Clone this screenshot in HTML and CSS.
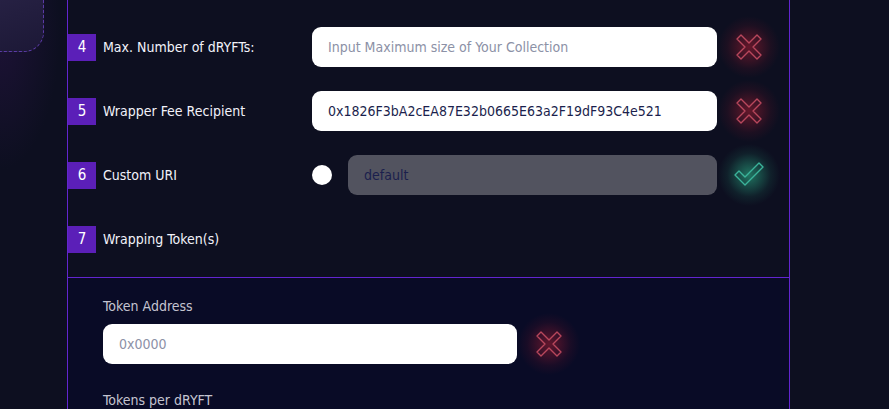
FILE: index.html
```html
<!DOCTYPE html>
<html lang="en">
<head>
  <meta charset="UTF-8" />
  <title>Create dRYFT Collection</title>
  <meta name="viewport" content="width=device-width, initial-scale=1.0" />
  <link rel="stylesheet" href="styles.css">
</head>
<body>
  <div class="page">
    <aside class="side">
      <div class="side-card"></div>
    </aside>

    <main class="panel">
      <section class="steps">
        <div class="row">
          <span class="num">4</span>
          <label class="label">Max. Number of dRYFTs:</label>
          <input class="field" type="text" placeholder="Input Maximum size of Your Collection" />
          <span class="status bad">
            <svg viewBox="0 0 30 30"><polygon points="3,7 7,3 15,11 23,3 27,7 19,15 27,23 23,27 15,19 7,27 3,23 11,15" /></svg>
          </span>
        </div>

        <div class="row">
          <span class="num">5</span>
          <label class="label">Wrapper Fee Recipient</label>
          <input class="field" type="text" value="0x1826F3bA2cEA87E32b0665E63a2F19dF93C4e521" />
          <span class="status bad">
            <svg viewBox="0 0 30 30"><polygon points="3,7 7,3 15,11 23,3 27,7 19,15 27,23 23,27 15,19 7,27 3,23 11,15" /></svg>
          </span>
        </div>

        <div class="row">
          <span class="num">6</span>
          <label class="label">Custom URI</label>
          <div class="uri">
            <span class="radio"></span>
            <input class="field off" type="text" value="default" disabled />
          </div>
          <span class="status good">
            <svg viewBox="0 0 30 26"><polygon points="1,13 5,9 11,15 25,1 29,5 11,23" /></svg>
          </span>
        </div>

        <div class="row">
          <span class="num">7</span>
          <label class="label">Wrapping Token(s)</label>
        </div>
      </section>

      <section class="tokens">
        <label class="sub">Token Address</label>
        <div class="token-row">
          <input class="field" type="text" placeholder="0x0000" />
          <span class="status bad">
            <svg viewBox="0 0 30 30"><polygon points="3,7 7,3 15,11 23,3 27,7 19,15 27,23 23,27 15,19 7,27 3,23 11,15" /></svg>
          </span>
        </div>
        <label class="sub">Tokens per dRYFT</label>
      </section>
    </main>
  </div>
</body>
</html>
```

FILE: styles.css
```css
body {
  margin: 0;
  padding: 0;
  background: #0d0f20;
  font-family: "Liberation Sans Narrow", "DejaVu Sans Condensed", "Roboto", sans-serif;
  color: #f2f2fa;
  overflow: hidden;
}
.page {
  display: flex;
  height: 409px;
}
.side {
  width: 67px;
  flex-shrink: 0;
  background: radial-gradient(ellipse 60px 140px at 0 30px, #1d1236 0%, #0d0f20 100%);
}
.side-card {
  width: 62px;
  height: 70px;
  margin: -20px 0 0 -20px;
  border: 1px dashed #5b3aa6;
  border-radius: 20px;
  background: linear-gradient(160deg, #2a2448, #1c1836);
}
.panel {
  width: 721px;
  border-left: 1px solid #6225d0;
  border-right: 1px solid #6225d0;
  display: flex;
  flex-direction: column;
}
.steps {
  padding: 27px 0 18px;
  display: flex;
  flex-direction: column;
  gap: 24px;
  border-bottom: 1px solid #6225d0;
}
.row {
  display: flex;
  align-items: center;
  height: 40px;
}
.num {
  width: 28px;
  height: 27px;
  background: #5b1fb8;
  color: #fff;
  font-size: 15px;
  display: flex;
  align-items: center;
  justify-content: center;
  flex-shrink: 0;
}
.label {
  width: 209px;
  margin-left: 7px;
  font-size: 14px;
}
.field {
  width: 405px;
  height: 40px;
  box-sizing: border-box;
  border: none;
  border-radius: 9px;
  background: #fff;
  padding: 0 16px;
  font-family: inherit;
  font-size: 14px;
  color: #1b1f4d;
  outline: none;
}
.field::placeholder {
  color: #8c91a6;
}
.uri {
  width: 405px;
  display: flex;
  align-items: center;
}
.radio {
  width: 20px;
  height: 20px;
  border-radius: 50%;
  background: #fff;
  margin: 0 16px 0 0;
  flex-shrink: 0;
}
.field.off {
  width: 369px;
  background: #52535f;
  color: #1b1f4d;
}
.status {
  width: 62px;
  height: 62px;
  margin: -11px 0 -11px 1px;
  display: flex;
  align-items: center;
  justify-content: center;
}
.status svg {
  width: 30px;
  height: 30px;
  fill: none;
  stroke-width: 1.4;
  stroke-linejoin: round;
}
.bad {
  background: radial-gradient(circle closest-side, rgba(170, 30, 50, 0.55), rgba(120, 20, 40, 0.15) 70%, transparent);
}
.bad svg {
  stroke: #b8475c;
}
.good {
  background: radial-gradient(circle closest-side, rgba(40, 160, 125, 0.7), rgba(30, 110, 90, 0.18) 70%, transparent);
}
.good svg {
  height: 26px;
  stroke: #3bb39a;
}
.tokens {
  flex: 1;
  background: #090b26;
  padding: 20px 0 0 35px;
  display: flex;
  flex-direction: column;
}
.sub {
  font-size: 14px;
  color: #c4c4d0;
  height: 20px;
}
.token-row {
  display: flex;
  align-items: center;
  margin: 6px 0 28px;
}
.token-row .field {
  width: 414px;
}
```
